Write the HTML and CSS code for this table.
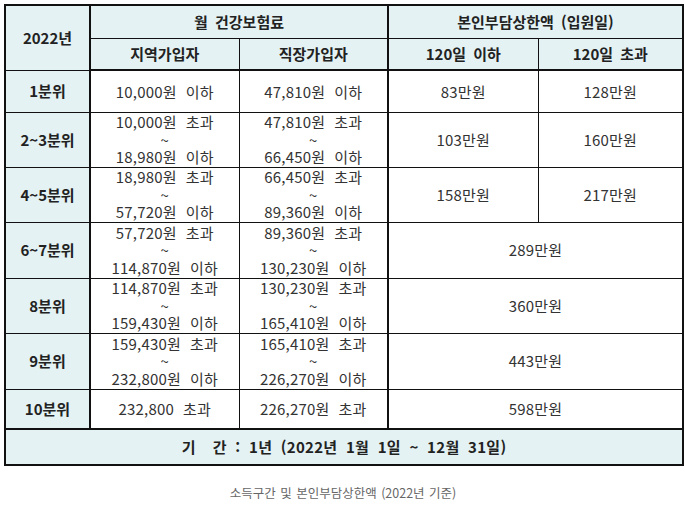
FILE: index.html
```html
<!DOCTYPE html>
<html lang="ko">
<head>
<meta charset="utf-8">
<title>소득구간 및 본인부담상한액</title>
<link rel="stylesheet" href="styles.css">
</head>
<body>
<figure class="fig">
<table class="tbl">
  <colgroup>
    <col class="c1"><col class="c2"><col class="c3"><col class="c4"><col class="c5">
  </colgroup>
  <thead>
    <tr class="h1">
      <th rowspan="2" class="hd sep-r">2022년</th>
      <th colspan="2" class="hd sep-r">월 건강보험료</th>
      <th colspan="2" class="hd">본인부담상한액 (입원일)</th>
    </tr>
    <tr class="h2">
      <th class="hd">지역가입자</th>
      <th class="hd sep-r">직장가입자</th>
      <th class="hd">120일 이하</th>
      <th class="hd">120일 초과</th>
    </tr>
  </thead>
  <tbody>
    <tr class="r1">
      <th class="hd sep-r">1분위</th>
      <td>10,000원 이하</td>
      <td class="sep-r">47,810원 이하</td>
      <td>83만원</td>
      <td>128만원</td>
    </tr>
    <tr class="r3a">
      <th class="hd sep-r">2~3분위</th>
      <td>10,000원 초과<br>~<br>18,980원 이하</td>
      <td class="sep-r">47,810원 초과<br>~<br>66,450원 이하</td>
      <td>103만원</td>
      <td>160만원</td>
    </tr>
    <tr class="r3a">
      <th class="hd sep-r">4~5분위</th>
      <td>18,980원 초과<br>~<br>57,720원 이하</td>
      <td class="sep-r">66,450원 초과<br>~<br>89,360원 이하</td>
      <td>158만원</td>
      <td>217만원</td>
    </tr>
    <tr class="r3b">
      <th class="hd sep-r">6~7분위</th>
      <td>57,720원 초과<br>~<br>114,870원 이하</td>
      <td class="sep-r">89,360원 초과<br>~<br>130,230원 이하</td>
      <td colspan="2">289만원</td>
    </tr>
    <tr class="r3a">
      <th class="hd sep-r">8분위</th>
      <td>114,870원 초과<br>~<br>159,430원 이하</td>
      <td class="sep-r">130,230원 초과<br>~<br>165,410원 이하</td>
      <td colspan="2">360만원</td>
    </tr>
    <tr class="r3b">
      <th class="hd sep-r">9분위</th>
      <td>159,430원 초과<br>~<br>232,800원 이하</td>
      <td class="sep-r">165,410원 초과<br>~<br>226,270원 이하</td>
      <td colspan="2">443만원</td>
    </tr>
    <tr class="r10">
      <th class="hd sep-r">10분위</th>
      <td>232,800 초과</td>
      <td class="sep-r">226,270원 초과</td>
      <td colspan="2">598만원</td>
    </tr>
  </tbody>
  <tfoot>
    <tr class="ft">
      <th colspan="5" class="hd">기&nbsp; 간 : 1년 (2022년 1월 1일 ~ 12월 31일)</th>
    </tr>
  </tfoot>
</table>
<figcaption class="cap">소득구간 및 본인부담상한액 (2022년 기준)</figcaption>
</figure>
</body>
</html>
```
FILE: styles.css
```css
html, body {
  margin: 0;
  padding: 0;
  background: #ffffff;
}
body {
  font-family: "Noto Sans CJK KR", "Noto Sans", sans-serif;
  color: #333333;
}
.fig {
  margin: 0;
  padding: 4px 0 0 4px;
}
.tbl {
  border-collapse: collapse;
  table-layout: fixed;
  width: 678px;
  border: 2px solid #111111;
  font-size: 15px;
  line-height: 17.5px;
}
.c1 { width: 85px; }
.c2 { width: 149px; }
.c3 { width: 149px; }
.c4 { width: 150px; }
.c5 { width: 145px; }
.tbl th, .tbl td {
  border: 1px solid #111111;
  padding: 0;
  text-align: center;
  vertical-align: middle;
  white-space: nowrap;
}
.tbl td {
  font-weight: 400;
  color: #333333;
  background: #ffffff;
  word-spacing: 4.5px;
  letter-spacing: 0.2px;
}
.hd {
  background: #e4f2f4;
  font-weight: 700;
  color: #222222;
  word-spacing: 3px;
}
.tbl .sep-r { border-right: 2px solid #111111; }
.h2 th { border-bottom: 2px solid #111111; }
.h1 { height: 33px; }
.h2 { height: 32px; }
.r1 { height: 42px; }
.r3a { height: 55px; }
.r3b { height: 56px; }
.r10 { height: 40px; }
.ft { height: 36px; }
.ft th {
  border-top: 2px solid #111111;
  word-spacing: 4px;
  letter-spacing: 0.3px;
}
.cap {
  margin: 17px 0 0 0;
  width: 678px;
  text-align: center;
  font-size: 12.5px;
  word-spacing: 1px;
  color: #666666;
}
```
